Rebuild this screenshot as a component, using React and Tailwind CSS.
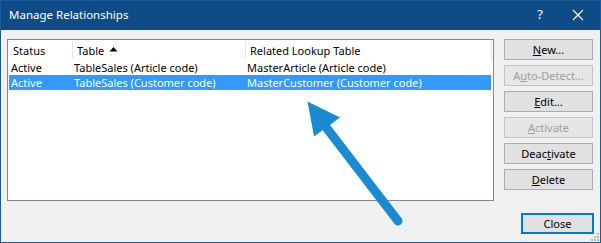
import React from "react";

function Btn({ children, disabled }) {
  return (
    <div
      className={
        "h-[21px] w-[89px] flex items-center justify-center border text-[11px] leading-none " +
        (disabled
          ? "border-[#c4c4c4] bg-[#e6e6e6] text-[#a0a0a0]"
          : "border-[#adadad] bg-[#e1e1e1] text-black")
      }
    >
      {children}
    </div>
  );
}

export default function App() {
  return (
    <div
      className="relative w-[601px] h-[243px] border border-[#1a5a9a] bg-[#f0f0f0] flex flex-col overflow-hidden"
      style={{ fontFamily: '"Noto Sans", "Open Sans", sans-serif' }}
    >
      {/* title bar */}
      <div className="h-[30px] -mx-px -mt-px bg-[#0f4c87] flex items-center text-white shrink-0">
        <div className="pl-[9px] text-[11.5px] flex-1">Manage Relationships</div>
        <div className="w-[30px] text-center text-[13px]">?</div>
        <div className="w-[46px] flex justify-center">
          <svg width="12" height="12" viewBox="0 0 12 12">
            <path d="M1 1 L11 11 M11 1 L1 11" stroke="white" strokeWidth="1.2" />
          </svg>
        </div>
      </div>

      <div className="flex pl-[6px] pt-[9px] pr-[6px]">
        {/* list */}
        <div className="w-[487px] h-[162px] border border-[#828790] bg-white text-[11px] leading-[15px] text-black">
          <div className="h-[20px] flex items-center relative">
            <div className="w-[64px] pl-[5px]">Status</div>
            <div className="w-px h-[18px] bg-[#e5e5e5]" />
            <div className="w-[172px] pl-[4px] flex items-center">
              Table
              <svg width="9" height="6" viewBox="0 0 9 6" className="ml-[5px] mb-[2px]">
                <path d="M0.5 5.5 L4.5 1 L8.5 5.5 Z" fill="black" />
              </svg>
            </div>
            <div className="w-px h-[18px] bg-[#e5e5e5]" />
            <div className="flex-1 pl-[4px]">Related Lookup Table</div>
            <div className="w-px h-[18px] bg-[#e5e5e5] mr-[1px]" />
          </div>
          <div className="h-[15px] flex items-center">
            <div className="w-[66px] pl-[3px]">Active</div>
            <div className="w-[173px]">TableSales (Article code)</div>
            <div>MasterArticle (Article code)</div>
          </div>
          <div className="h-[15px] flex items-center bg-[#3399ff] text-white ml-px mr-[2px]">
            <div className="w-[65px] pl-[2px]">Active</div>
            <div className="w-[173px]">TableSales (Customer code)</div>
            <div>MasterCustomer (Customer code)</div>
          </div>
        </div>

        {/* buttons */}
        <div className="ml-[10px] flex flex-col gap-[5px]">
          <Btn><span><span className="underline">N</span>ew...</span></Btn>
          <Btn disabled><span>A<span className="underline">u</span>to-Detect...</span></Btn>
          <Btn><span><span className="underline">E</span>dit...</span></Btn>
          <Btn disabled><span><span className="underline">A</span>ctivate</span></Btn>
          <Btn><span>Deac<span className="underline">t</span>ivate</span></Btn>
          <Btn><span><span className="underline">D</span>elete</span></Btn>
        </div>
      </div>

      <div className="flex justify-end pr-[6px] mt-[12px]">
        <div className="w-[73px] h-[21px] border-2 border-[#0078d7] bg-[#e1e1e1] flex items-center justify-center text-[11px] leading-none text-black">
          Close
        </div>
      </div>

      {/* size grip */}
      <svg width="8" height="8" viewBox="0 0 8 8" className="absolute right-[1px] bottom-[1px]">
        <rect x="6" y="0" width="2" height="2" fill="#b8b8b8" />
        <rect x="3" y="3" width="2" height="2" fill="#b8b8b8" />
        <rect x="6" y="3" width="2" height="2" fill="#b8b8b8" />
        <rect x="0" y="6" width="2" height="2" fill="#b8b8b8" />
        <rect x="3" y="6" width="2" height="2" fill="#b8b8b8" />
        <rect x="6" y="6" width="2" height="2" fill="#b8b8b8" />
      </svg>

      {/* annotation arrow */}
      <svg width="601" height="243" className="absolute left-[-1px] top-[-1px] pointer-events-none">
        <line x1="398" y1="221" x2="322" y2="122" stroke="#1a8bd1" strokeWidth="9" strokeLinecap="round" />
        <path d="M307.5 101.5 L340 117.5 L314 136.5 Z" fill="#1a8bd1" />
      </svg>
    </div>
  );
}
